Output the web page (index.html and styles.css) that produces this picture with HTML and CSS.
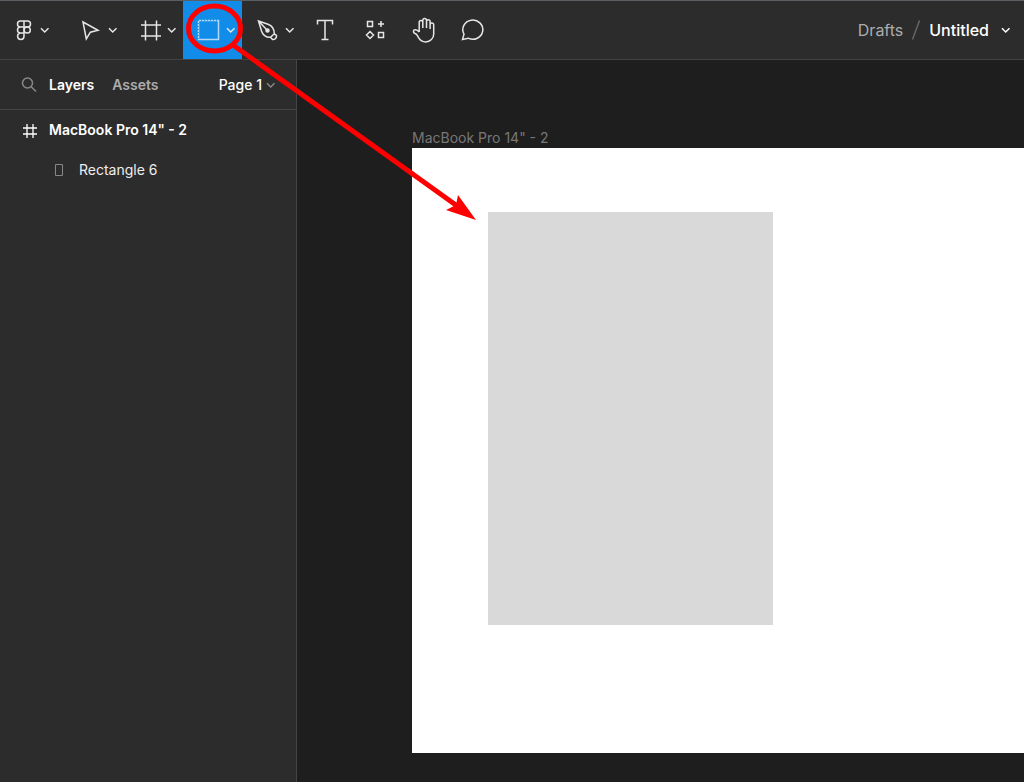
FILE: index.html
```
<!DOCTYPE html>
<html lang="en">
<head>
<meta charset="utf-8">
<title>Untitled</title>
<link rel="stylesheet" href="styles.css">
</head>
<body>
<svg class="defs" width="0" height="0" aria-hidden="true">
  <symbol id="chevron" viewBox="0 0 10 10"><path d="M1 3.200 4.700 7l3.800-3.800" fill="none" stroke="currentColor" stroke-width="1.500"/></symbol>
</svg>
<div class="app">
  <header class="toolbar">
    <nav class="tools" aria-label="Tools">
      <button class="tool menu" aria-label="Main menu">
        <svg class="icon" viewBox="0 0 24 24"><path d="M12 3H8.500a3 3 0 0 0 0 6H12zM12 9H8.500a3 3 0 0 0 0 6H12zM12 15H8.500A3.200 3.200 0 1 0 12 18.200zM12 3h3.500a3 3 0 0 1 0 6H12z"/><circle cx="15.200" cy="12" r="3.100"/></svg>
        <svg class="chevron"><use href="#chevron"/></svg>
      </button>
      <button class="tool" aria-label="Move">
        <svg class="icon" viewBox="0 0 24 24"><path d="M5 4l15 8.300-7.600 1.900L8.300 21z"/></svg>
        <svg class="chevron"><use href="#chevron"/></svg>
      </button>
      <button class="tool" aria-label="Frame">
        <svg class="icon" viewBox="0 0 24 24"><path d="M8.500 2.500v20M19.500 2.500v20M4 7h20M4 18h20"/></svg>
        <svg class="chevron"><use href="#chevron"/></svg>
      </button>
      <button class="tool active" aria-label="Rectangle" aria-pressed="true">
        <svg class="icon" viewBox="0 0 24 24"><path d="M2.500 2.500h20v19h-20z"/><path class="ticks" d="M2 2h21M2 2v20"/></svg>
        <svg class="chevron"><use href="#chevron"/></svg>
      </button>
      <button class="tool" aria-label="Pen">
        <svg class="icon" viewBox="0 0 24 24"><path d="M3.500 3l9.500 3.300c3.500 1.200 6.200 5 6.300 9.500l-3.800 3.500C11 19.500 7.800 17 6.500 13zM3.500 3l8.500 9M19.300 15.800l2.200 1.700c.3 2.200-1.500 4.200-4 4l-2-2.200"/><circle class="solid" cx="12.500" cy="12.500" r="1.500"/></svg>
        <svg class="chevron"><use href="#chevron"/></svg>
      </button>
      <button class="tool single" aria-label="Text">
        <svg class="icon" viewBox="0 0 24 24"><path d="M4.500 6.500v-4h15v4M12 2.500v19M8.500 21.500h7"/></svg>
      </button>
      <button class="tool single" aria-label="Resources">
        <svg class="icon" viewBox="0 0 24 24"><path d="M5.500 3.500h5v5h-5zM16.500 14.500h5v5h-5zM19 3v6M16 6h6M8 13.500l3.500 3.500-3.500 3.500L4.500 17z"/></svg>
      </button>
      <button class="tool single" aria-label="Hand">
        <svg class="icon" viewBox="-1 0 24 28"><path d="M7.200 16V6.200a1.800 1.800 0 0 1 3.600 0V12M10.800 12V4.300a1.800 1.800 0 0 1 3.700 0V12M14.500 12V5.500a1.800 1.800 0 0 1 3.600 0V13M18.100 8.800a1.800 1.800 0 0 1 3.600 0v9.100c0 4.500-3.400 8-8 8-3.400 0-5.500-1.500-7-4l-1.300-2.300c-.7-1.200-1.600-1.800-2.800-2.300-1.500-.7-1.800-3.500.6-3.500 2 0 3 .8 4 2.200"/></svg>
      </button>
      <button class="tool single" aria-label="Comment">
        <svg class="icon" viewBox="0 0 24 24"><path d="M2.500 21.500L4 16.200a10 9.600 0 1 1 4.200 4z"/></svg>
      </button>
    </nav>
    <div class="file">
      <a class="folder" href="#">Drafts</a>
      <svg class="slash" viewBox="0 0 8 20"><path d="M7.500.500l-7 19"/></svg>
      <button class="title">Untitled <svg class="chevron"><use href="#chevron"/></svg></button>
    </div>
  </header>
  <aside class="sidebar">
    <div class="tabs">
      <button class="search" aria-label="Search"><svg viewBox="0 0 16 16"><circle cx="6.500" cy="6" r="5"/><path d="M10 9.500l5 5"/></svg></button>
      <button class="tab selected">Layers</button>
      <button class="tab">Assets</button>
      <button class="page">Page 1 <svg class="chevron"><use href="#chevron"/></svg></button>
    </div>
    <ul class="layers">
      <li class="layer parent"><svg viewBox="0 0 16 16"><path d="M6 2v14M12 2v14M2 6h14M2 12h14"/></svg>MacBook Pro 14" - 2</li>
      <li class="layer child"><svg viewBox="0 0 16 16"><path d="M4.500 2.500h7v11h-7z"/></svg>Rectangle 6</li>
    </ul>
  </aside>
  <main class="canvas">
    <div class="frame-label">MacBook Pro 14" - 2</div>
    <div class="frame"><div class="rectangle"></div></div>
  </main>
  <svg class="annotation" aria-hidden="true"><ellipse cx="214.500" cy="28.500" rx="26" ry="22.500"/><path d="M233 45L460 208"/><path class="head" d="M476 220L458 195 456 205 446 210z"/></svg>
</div>
</body>
</html>
```
FILE: styles.css
```
* { box-sizing: border-box; }
body { margin: 0; background: #1e1e1e; font-family: Inter, sans-serif; font-size: 14px; line-height: 20px; color: #fff; }
button { display: flex; align-items: center; margin: 0; padding: 0; border: 0; background: none; color: inherit; font: inherit; }
svg { display: block; flex: none; fill: none; stroke: currentColor; }
.defs { position: absolute; }
.app { position: relative; display: grid; grid-template: 60px 1fr / 297px 1fr; min-height: 100vh; overflow: hidden; }

.toolbar { grid-column: 1 / -1; display: flex; justify-content: space-between; background: #2c2c2c; border-top: 1px solid #5b5e63; border-bottom: 1px solid #444; }
.tools { display: flex; color: #e6e6e6; }
.tool { gap: 6px; padding: 0 6px 0 13px; }
.tool.menu { gap: 4px; padding: 0 15px 0 12px; }
.tool.single { padding: 0 13px 0 12px; }
.tool.active { background: #118ce8; }
.icon { width: 24px; height: 24px; stroke-width: 1.5; overflow: visible; }
.single .icon { height: auto; }
.active .icon { color: #b5daf8; }
.ticks { stroke: #118ce8; stroke-dasharray: 1 2; }
.solid { fill: currentColor; }
.chevron { width: 10px; height: 10px; }

.file { display: flex; align-items: center; gap: 9px; padding: 0 13px 0 0; font-size: 16px; }
.folder { color: #acacac; text-decoration: none; }
.slash { width: 8px; height: 20px; stroke: #666; stroke-width: 1.5; }
.title { gap: 12px; font-weight: 500; }

.sidebar { background: #2c2c2c; border-right: 1px solid #444; }
.tabs { display: flex; align-items: center; height: 50px; padding: 0 20px 0 21px; border-bottom: 1px solid #444; font-weight: 600; }
.search { margin-right: 12px; color: #888; }
.search svg { width: 16px; height: 16px; stroke-width: 1.5; }
.tab { color: #acacac; margin-right: 18px; }
.tab.selected { color: #fff; }
.page { gap: 4px; margin-left: auto; font-weight: 500; }
.page .chevron { color: #888; }
.layers { margin: 0; padding: 0; list-style: none; }
.layer { display: flex; align-items: center; gap: 12px; height: 40px; padding-left: 21px; }
.layer svg { width: 16px; height: 16px; }
.parent { font-weight: 600; }
.parent svg { stroke-width: 1.3; }
.child { padding-left: 51px; color: #eee; }
.child svg { color: #888; }

.canvas { padding: 68px 0 29px 115px; }
.frame-label { color: #777; }
.frame { height: 605px; padding: 64px 0 0 76px; background: #fff; }
.rectangle { width: 285px; height: 413px; background: #d9d9d9; }

.annotation { position: absolute; top: 0; left: 0; width: 480px; height: 230px; stroke: #f00; stroke-width: 5; pointer-events: none; }
.annotation .head { fill: #f00; stroke: none; }
```
